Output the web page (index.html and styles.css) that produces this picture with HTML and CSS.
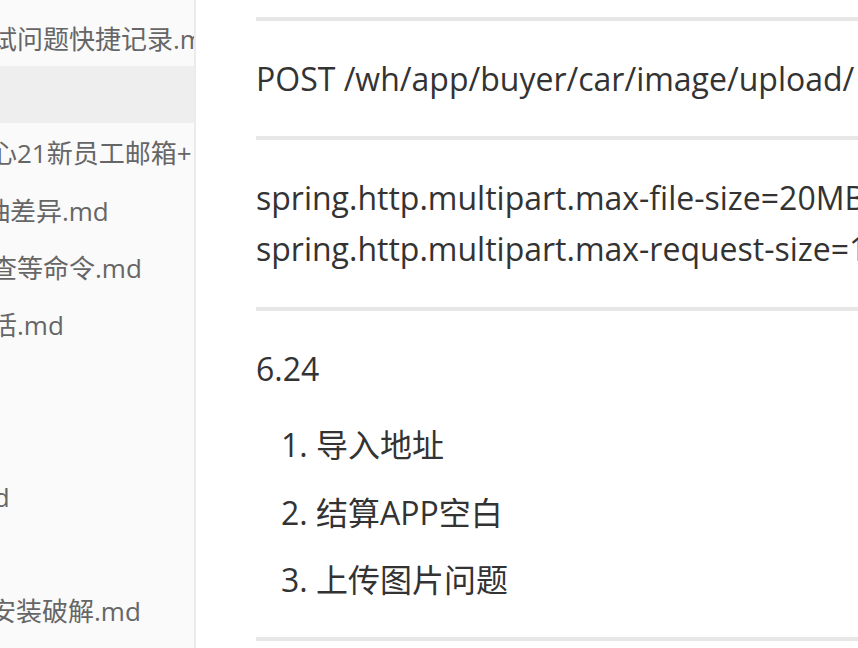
FILE: index.html
```html
<!DOCTYPE html>
<html lang="zh-CN">
<head>
<meta charset="utf-8">
<title>Typora</title>
<link rel="stylesheet" href="styles.css">
</head>
<body>
<div class="app">
  <aside class="sidebar">
    <ul class="file-list">
      <li class="file sub">测试问题快捷记录.md</li>
      <li class="file sub active"></li>
      <li class="file sub">中心21新员工邮箱+ 入职流程.md</li>
      <li class="file">PDA抽差异.md</li>
      <li class="file sub">排查等命令.md</li>
      <li class="file sub">生活.md</li>
      <li class="file">js.md</li>
      <li class="file">a.md</li>
      <li class="file">go.md</li>
      <li class="file">1.md</li>
      <li class="file">IDEA安装破解.md</li>
    </ul>
  </aside>
  <main class="content">
    <hr class="rule">
    <p class="para">POST /wh/app/buyer/car/image/upload/</p>
    <hr class="rule">
    <p class="para">spring.http.multipart.max-file-size=20MB<br>spring.http.multipart.max-request-size=100MB</p>
    <hr class="rule">
    <p class="para">6.24</p>
    <ol class="steps">
      <li class="step">导入地址</li>
      <li class="step">结算APP空白</li>
      <li class="step">上传图片问题</li>
    </ol>
    <hr class="rule">
  </main>
</div>
</body>
</html>
```

FILE: styles.css
```css
html, body {
  margin: 0;
  padding: 0;
  height: 100%;
  overflow: hidden;
  background: #ffffff;
}

.app {
  display: flex;
  height: 648px;
  width: 858px;
  overflow: hidden;
}

.sidebar {
  flex: none;
  width: 194px;
  background: #fafafa;
  border-right: 2px solid #ebebeb;
  overflow: hidden;
}

.file-list {
  list-style: none;
  margin: 0 0 0 -67px;
  padding: 9px 0 0 0;
}

.file {
  box-sizing: border-box;
  height: 57.2px;
  padding-top: 3px;
  line-height: 54px;
  white-space: pre;
  font-family: "Open Sans", "Noto Sans CJK SC", sans-serif;
  font-size: 26px;
  color: #666666;
}

.file.sub {
  padding-left: 32px;
}

.file.active {
  background: #eeeeee;
}

.content {
  flex: 1;
  min-width: 0;
  padding: 17px 0 0 60px;
  overflow: hidden;
  font-family: "Open Sans", "Noto Sans CJK SC", sans-serif;
  font-size: 32px;
  line-height: 1.6;
  color: #333333;
  white-space: nowrap;
}

.rule {
  height: 4px;
  margin: 32px 0;
  padding: 0;
  border: 0 none;
  background: #e7e7e7;
}

.rule:first-child {
  margin-top: 0;
}

.para {
  margin: 25.6px 0;
}

.steps {
  margin: 25.6px 0;
  padding-left: 60px;
}

.step {
  margin: 16px 0;
}
```
